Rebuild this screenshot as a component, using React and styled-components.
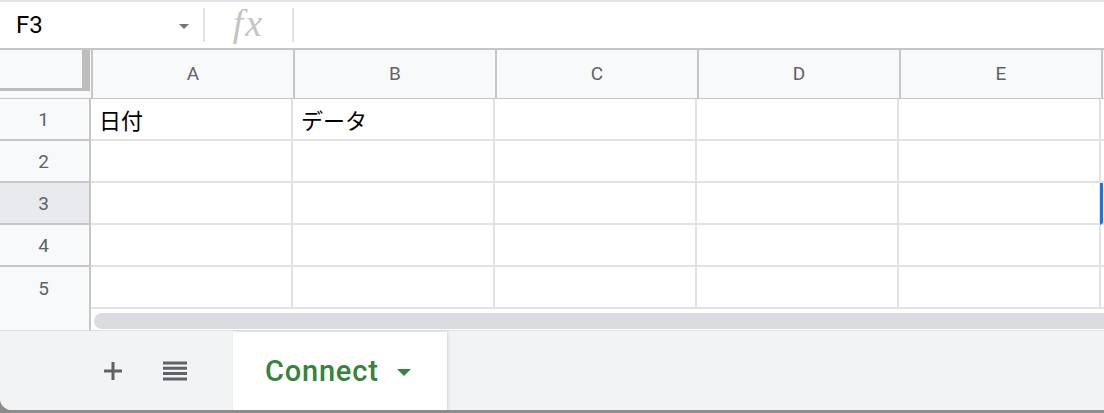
import React from "react";
import styled, { createGlobalStyle } from "styled-components";

const GlobalStyle = createGlobalStyle`
  html, body {
    margin: 0;
    padding: 0;
    background: #8c8c8c;
  }
  body {
    font-family: Roboto, "Liberation Sans", "Noto Sans CJK JP", sans-serif;
  }
`;

const columns = ["A", "B", "C", "D", "E"];
const rows = [
  { n: 1, cells: ["日付", "データ", "", "", ""] },
  { n: 2, cells: ["", "", "", "", ""] },
  { n: 3, cells: ["", "", "", "", ""], selected: true },
  { n: 4, cells: ["", "", "", "", ""] },
  { n: 5, cells: ["", "", "", "", ""], last: true },
];

const App = () => {
  return (
    <>
      <GlobalStyle />
      <Window>
        <TopEdge />
        <FormulaBar>
          <NameBox>
            <span>F3</span>
            <NameArrow />
          </NameBox>
          <Divider />
          <FxBox>fx</FxBox>
          <Divider />
          <FormulaInput />
        </FormulaBar>

        <Grid>
          <Corner>
            <FreezeRight />
            <FreezeBottom />
          </Corner>
          {columns.map((c) => (
            <ColHeader key={c}>{c}</ColHeader>
          ))}
          <ColHeader />

          {rows.map((row) => (
            <React.Fragment key={row.n}>
              <RowHeader $selected={row.selected} $last={row.last}>
                {row.n}
              </RowHeader>
              {row.cells.map((text, i) => (
                <Cell key={i}>{text}</Cell>
              ))}
              <Cell $edge $selected={row.selected} />
            </React.Fragment>
          ))}

          <RowHeader $filler />
          <ScrollArea>
            <ScrollThumb />
          </ScrollArea>
        </Grid>

        <SheetBar>
          <BarButton title="Add sheet">
            <svg width="20" height="20" viewBox="0 0 20 20">
              <path d="M10 1v18M1 10h18" stroke="#5f6368" strokeWidth="3" />
            </svg>
          </BarButton>
          <BarButton title="All sheets">
            <svg width="24" height="20" viewBox="0 0 24 20">
              <path
                d="M0 2h24M0 7.3h24M0 12.6h24M0 18h24"
                stroke="#5f6368"
                strokeWidth="3"
              />
            </svg>
          </BarButton>
          <SheetTab>
            Connect
            <TabArrow />
          </SheetTab>
        </SheetBar>
      </Window>
    </>
  );
};

export default App;

const Window = styled.div`
  width: 1104px;
  height: 410px;
  background: #ffffff;
  border-bottom-left-radius: 12px;
  overflow: hidden;
  display: flex;
  flex-direction: column;
`;

const TopEdge = styled.div`
  height: 2px;
  background: #e1e3e6;
`;

const FormulaBar = styled.div`
  height: 46px;
  display: flex;
  align-items: center;
  border-bottom: 2px solid #c6c6c6;
  background: #ffffff;
`;

const NameBox = styled.div`
  width: 203px;
  padding: 0 14px 0 16px;
  display: flex;
  align-items: center;
  justify-content: space-between;
  box-sizing: border-box;
  font-size: 24px;
  color: #000;
`;

const NameArrow = styled.div`
  width: 0;
  height: 0;
  border-left: 5px solid transparent;
  border-right: 5px solid transparent;
  border-top: 5px solid #737373;
  margin-top: 3px;
`;

const Divider = styled.div`
  width: 2px;
  height: 34px;
  background: #e3e3e3;
`;

const FxBox = styled.div`
  width: 87px;
  text-align: center;
  font-family: "Liberation Serif", "DejaVu Serif", serif;
  font-style: italic;
  font-size: 38px;
  color: #c4c4c4;
  line-height: 1;
  margin-top: -5px;
  letter-spacing: 2px;
`;

const FormulaInput = styled.div`
  flex: 1;
`;

const Grid = styled.div`
  display: grid;
  grid-template-columns: 91px repeat(5, 202px) 1fr;
  grid-template-rows: 49px repeat(5, 42px) 22px;
`;

const Corner = styled.div`
  position: relative;
  background: #f8f9fa;
  border-bottom: 1px solid #c6c6c6;
  box-sizing: border-box;
`;

const FreezeRight = styled.div`
  position: absolute;
  top: 0;
  right: 1px;
  width: 8px;
  height: 41px;
  background: #bdbdbd;
`;

const FreezeBottom = styled.div`
  position: absolute;
  top: 38px;
  left: 0;
  width: 90px;
  height: 3px;
  background: #bdbdbd;
`;

const ColHeader = styled.div`
  background: #f8f9fa;
  border-left: 2px solid #c6c6c6;
  border-bottom: 1px solid #c6c6c6;
  box-sizing: border-box;
  display: flex;
  align-items: center;
  justify-content: center;
  font-size: 19px;
  color: #5f6368;
  padding-bottom: 2px;
`;

const RowHeader = styled.div`
  background: ${(p) => (p.$selected ? "#e8eaed" : "#f8f9fa")};
  border-right: 2px solid #c6c6c6;
  border-bottom: ${(p) =>
    p.$filler ? "1px solid #e0e0e0" : p.$last ? "none" : "2px solid #c6c6c6"};
  box-sizing: border-box;
  display: flex;
  align-items: center;
  justify-content: center;
  font-size: 19px;
  color: #5f6368;
  padding-right: 2px;
`;

const Cell = styled.div`
  border-right: 2px solid #e2e2e2;
  border-bottom: 2px solid #e2e2e2;
  box-sizing: border-box;
  display: flex;
  align-items: center;
  padding-left: 8px;
  font-size: 22px;
  color: #000;
  font-family: "Noto Sans CJK JP", "Noto Sans", sans-serif;
  ${(p) =>
    p.$edge &&
    `
    padding-left: 0;
    border-right: none;
    border-left: ${p.$selected ? "3px solid #1a73e8" : "none"};
    margin-left: -1px;
  `}
`;

const ScrollArea = styled.div`
  grid-column: 2 / -1;
  display: flex;
  align-items: center;
  padding-left: 3px;
  border-bottom: 1px solid #e0e0e0;
  box-sizing: border-box;
`;

const ScrollThumb = styled.div`
  flex: 1;
  height: 16px;
  margin-top: 2px;
  border-radius: 8px 0 0 8px;
  background: #dadce0;
`;

const SheetBar = styled.div`
  flex: 1;
  background: #f1f3f4;
  display: flex;
  align-items: stretch;
  padding-left: 92px;
`;

const BarButton = styled.div`
  width: 42px;
  display: flex;
  align-items: center;
  justify-content: center;
  margin-right: 20px;
  &:nth-child(2) {
    margin-right: 37px;
  }
`;

const SheetTab = styled.div`
  width: 214px;
  margin-top: 1px;
  background: #ffffff;
  box-shadow: 1px 0 3px rgba(60, 64, 67, 0.18);
  display: flex;
  align-items: center;
  padding-left: 32px;
  box-sizing: border-box;
  font-size: 29px;
  font-weight: 500;
  letter-spacing: 0.8px;
  color: #34843a;
`;

const TabArrow = styled.div`
  width: 0;
  height: 0;
  margin-left: 18px;
  margin-top: 3px;
  border-left: 7px solid transparent;
  border-right: 7px solid transparent;
  border-top: 7px solid #34843a;
`;
